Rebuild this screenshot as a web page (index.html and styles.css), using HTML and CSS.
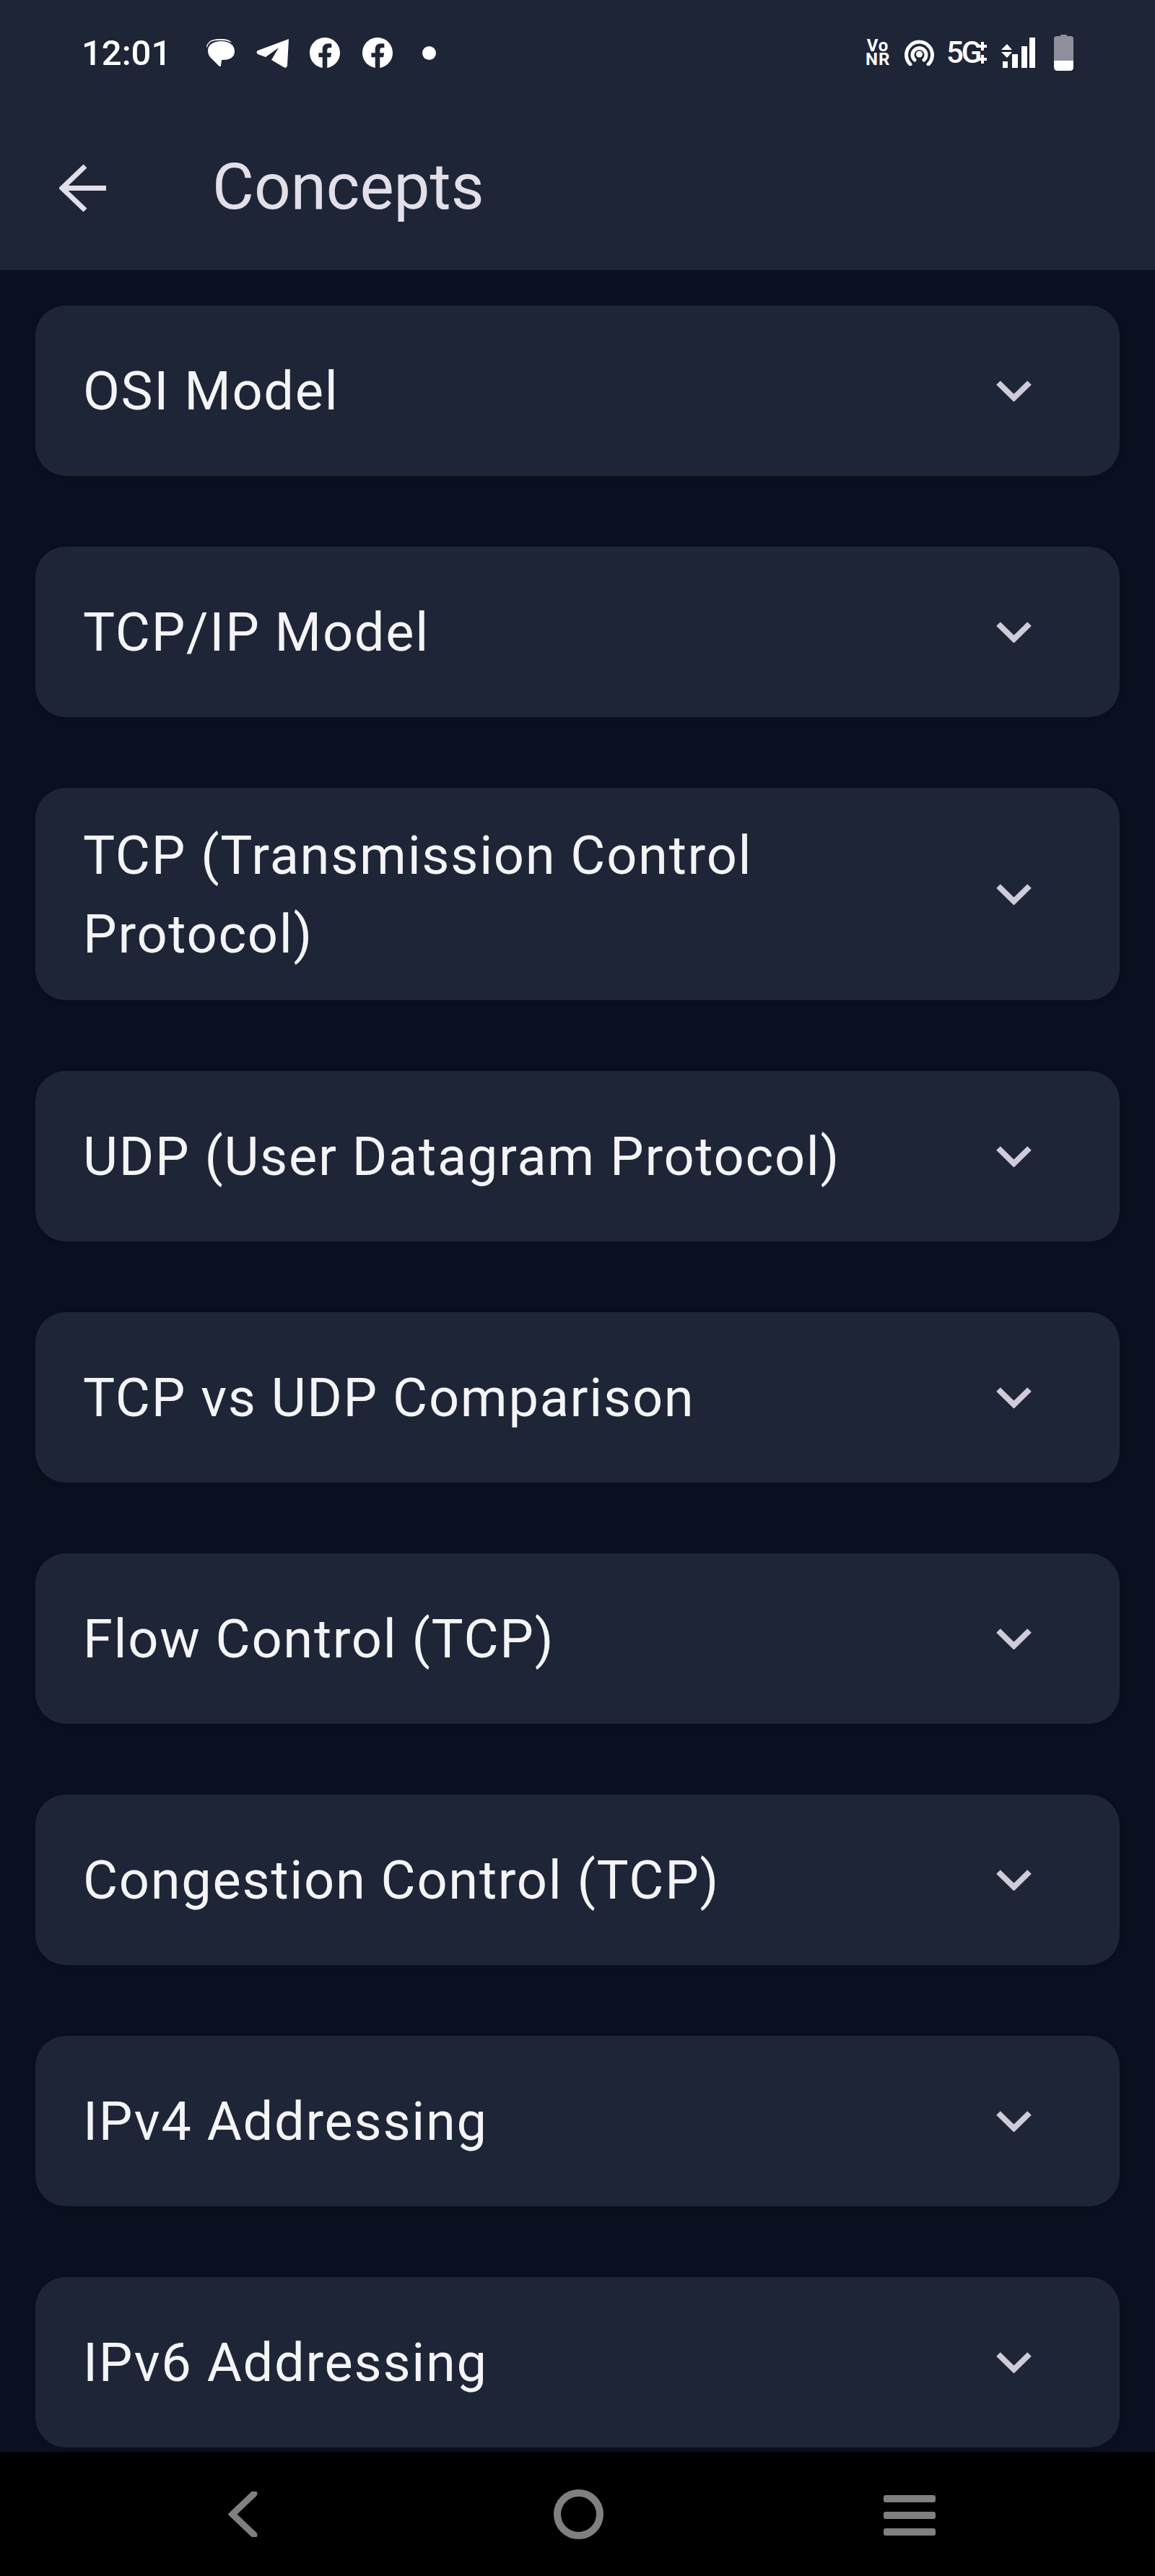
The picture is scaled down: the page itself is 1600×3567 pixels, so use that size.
FILE: index.html
```html
<!DOCTYPE html>
<html lang="en">
<head>
    <meta charset="UTF-8">
    <meta name="viewport" content="width=device-width, initial-scale=1.0">
    <title>Concepts</title>
    <link rel="stylesheet" href="styles.css">
</head>
<body>
    <div class="phone">
        <header class="top">
            <div class="status-bar">
                <span class="time">12:01</span>
                <svg class="ic-msg" viewBox="0 0 40 38"><path class="white" d="M4 5 C8 0 16 0 22 0 C28 0 33 1 36 5 L33 4 C27 1 12 1 7 4 C4 6 2 9 2 12 C0 10 2 7 4 5 Z"/><path class="white" d="M21 3 C32 3 40 8 40 17 C40 26 32 29 24 29 L22 29 L21 37 Q20 39 18 37 L9 28 C5 25 3 21 3 16 C3 8 11 3 21 3 Z"/></svg>
                <svg class="ic-tg" viewBox="0 0 45 41"><path class="white" d="M45 1 L43 38 Q42 42 38 40 L21 30 L31 13 L13 26 L2 22 Q-1 19 2 17 Z"/></svg>
                <svg class="ic-fb" viewBox="2 2 20 20"><path class="white" d="M12 2.04c-5.5 0-10 4.49-10 10.02 0 5 3.66 9.15 8.44 9.9v-7H7.9v-2.9h2.54V9.85c0-2.51 1.49-3.89 3.78-3.89 1.09 0 2.23.19 2.23.19v2.47h-1.26c-1.24 0-1.63.77-1.63 1.56v1.88h2.78l-.45 2.9h-2.33v7a10 10 0 0 0 8.44-9.9c0-5.53-4.5-10.02-10-10.02z"/></svg>
                <svg class="ic-fb ic-fb2" viewBox="2 2 20 20"><path class="white" d="M12 2.04c-5.5 0-10 4.49-10 10.02 0 5 3.66 9.15 8.44 9.9v-7H7.9v-2.9h2.54V9.85c0-2.51 1.49-3.89 3.78-3.89 1.09 0 2.23.19 2.23.19v2.47h-1.26c-1.24 0-1.63.77-1.63 1.56v1.88h2.78l-.45 2.9h-2.33v7a10 10 0 0 0 8.44-9.9c0-5.53-4.5-10.02-10-10.02z"/></svg>
                <span class="dot"></span>
                <span class="vonr">Vo<br>NR</span>
                <svg class="ic-hotspot" viewBox="0 0 41 36">
                    <circle class="white" cx="20.5" cy="20" r="4.5"/>
                    <path class="ring" d="M8 34 A18 18 0 1 1 33 34"/>
                    <path class="ring" d="M14 28 A9.5 9.5 0 1 1 27 28"/>
                </svg>
                <span class="net">5G</span>
                <svg class="ic-plus" viewBox="0 0 14 32"><path d="M7 1 V13 M1 7 H13 M7 19 V31 M1 25 H13"/></svg>
                <svg class="ic-signal" viewBox="0 0 47 42">
                    <path class="white" d="M8 9 L15 17 H0 Z M0 20 H15 L8 28 Z"/>
                    <rect class="white" x="2" y="33" width="7" height="9"/>
                    <rect class="white" x="15" y="23" width="8" height="19"/>
                    <rect class="white" x="28" y="12" width="8" height="30"/>
                    <rect class="white" x="39" y="0" width="8" height="42"/>
                </svg>
                <svg class="ic-battery" viewBox="0 0 27 50">
                    <path class="batt-empty" d="M9 0 H18 V2 H23 Q27 2 27 6 V36 H0 V6 Q0 2 4 2 H9 Z"/>
                    <path class="white" d="M0 36 H27 V45 Q27 50 22 50 H5 Q0 50 0 45 Z"/>
                </svg>
            </div>
            <div class="app-bar">
                <svg class="back-arrow" viewBox="0 0 65 65"><path d="M36 2 L4 32.5 L36 63 M4 32.5 H65"/></svg>
                <h1>Concepts</h1>
            </div>
        </header>

        <main class="list">
            <div class="card"><span>OSI Model</span><svg class="chev" viewBox="0 0 49 29"><path d="M3 3 L24.5 24 L46 3"/></svg></div>
            <div class="card"><span>TCP/IP Model</span><svg class="chev" viewBox="0 0 49 29"><path d="M3 3 L24.5 24 L46 3"/></svg></div>
            <div class="card"><span>TCP (Transmission Control Protocol)</span><svg class="chev" viewBox="0 0 49 29"><path d="M3 3 L24.5 24 L46 3"/></svg></div>
            <div class="card"><span>UDP (User Datagram Protocol)</span><svg class="chev" viewBox="0 0 49 29"><path d="M3 3 L24.5 24 L46 3"/></svg></div>
            <div class="card"><span>TCP vs UDP Comparison</span><svg class="chev" viewBox="0 0 49 29"><path d="M3 3 L24.5 24 L46 3"/></svg></div>
            <div class="card"><span>Flow Control (TCP)</span><svg class="chev" viewBox="0 0 49 29"><path d="M3 3 L24.5 24 L46 3"/></svg></div>
            <div class="card"><span>Congestion Control (TCP)</span><svg class="chev" viewBox="0 0 49 29"><path d="M3 3 L24.5 24 L46 3"/></svg></div>
            <div class="card"><span>IPv4 Addressing</span><svg class="chev" viewBox="0 0 49 29"><path d="M3 3 L24.5 24 L46 3"/></svg></div>
            <div class="card"><span>IPv6 Addressing</span><svg class="chev" viewBox="0 0 49 29"><path d="M3 3 L24.5 24 L46 3"/></svg></div>
        </main>

        <nav class="nav-bar">
            <svg class="nav-back" viewBox="0 0 41 63"><path d="M36 3 L6 31.5 L36 60"/></svg>
            <span class="nav-home"></span>
            <span class="nav-recent"><i></i><i></i><i></i></span>
        </nav>
    </div>
</body>
</html>
```

FILE: styles.css
```css
/* General Styles */
* {
    box-sizing: border-box;
}

body {
    margin: 0;
    padding: 0;
    font-family: Roboto, "Liberation Sans", sans-serif;
    background: #0a101f;
}

.phone {
    display: flex;
    flex-direction: column;
    height: 3567px;
    overflow: hidden;
}

.white {
    fill: #fff;
}

/* Header */
.top {
    flex: none;
    height: 374px;
    background-color: #1e2536;
}

.status-bar {
    display: flex;
    align-items: center;
    height: 146px;
    padding-left: 113px;
    color: #fff;
}

.time {
    width: 121px;
    font-size: 49px;
    font-weight: 500;
    line-height: 1;
}

.status-bar svg {
    flex: none;
}

.ic-msg {
    width: 40px;
    height: 38px;
    margin-left: 51px;
}

.ic-tg {
    width: 45px;
    height: 41px;
    margin-left: 30px;
}

.ic-fb {
    width: 42px;
    height: 42px;
    margin-left: 29px;
}

.ic-fb2 {
    margin-left: 31px;
}

.dot {
    width: 19px;
    height: 19px;
    margin-left: 41px;
    border-radius: 50%;
    background: #fff;
}

.vonr {
    width: 34px;
    margin-left: 595px;
    font-size: 24px;
    font-weight: 700;
    line-height: 19px;
    letter-spacing: 1px;
    text-align: center;
}

.ic-hotspot {
    width: 41px;
    height: 36px;
    margin-left: 20px;
}

.ring {
    fill: none;
    stroke: #fff;
    stroke-width: 5px;
    stroke-linecap: round;
}

.net {
    width: 42px;
    margin-left: 17px;
    font-size: 42px;
    font-weight: 500;
    line-height: 1;
    letter-spacing: -3px;
}

.ic-plus {
    width: 14px;
    height: 32px;
    margin-left: 1px;
}

.ic-plus path {
    fill: none;
    stroke: #fff;
    stroke-width: 4px;
}

.ic-signal {
    width: 47px;
    height: 42px;
    margin-left: 19px;
}

.ic-battery {
    width: 27px;
    height: 50px;
    margin-left: 26px;
}

.batt-empty {
    fill: #8f909c;
}

.app-bar {
    display: flex;
    align-items: center;
    height: 228px;
    padding-left: 82px;
}

.back-arrow {
    width: 65px;
    height: 65px;
    flex: none;
}

.back-arrow path {
    fill: none;
    stroke: #e2dfe9;
    stroke-width: 7px;
}

h1 {
    margin: 0 0 4px 147px;
    font-size: 89px;
    font-weight: 400;
    color: #e2dfe9;
}

/* Concept list */
.list {
    flex: 1;
    min-height: 0;
    overflow: hidden;
    display: flex;
    flex-direction: column;
    gap: 98px;
    padding: 49px 49px 0;
}

.card {
    flex: none;
    display: flex;
    align-items: center;
    justify-content: space-between;
    min-height: 236px;
    padding: 36.5px 122px 36.5px 66px;
    background-color: #1e2536;
    border-radius: 42px;
    box-shadow: 0 2px 6px rgba(0, 0, 0, 0.15);
    font-size: 74px;
    line-height: 109.5px;
    letter-spacing: 1.7px;
    color: #f4f4f6;
}

.card span {
    max-width: 1100px;
    padding-top: 2px;
}

.chev {
    flex: none;
    width: 49px;
    height: 29px;
}

.chev path {
    fill: none;
    stroke: #cfcbd8;
    stroke-width: 8px;
}

/* Bottom nav */
.nav-bar {
    flex: none;
    position: relative;
    height: 172px;
    background: #000;
}

.nav-back {
    position: absolute;
    left: 316px;
    top: 55px;
    width: 41px;
    height: 63px;
}

.nav-back path {
    fill: none;
    stroke: #808080;
    stroke-width: 9px;
    stroke-linecap: round;
}

.nav-home {
    position: absolute;
    left: 767px;
    top: 52px;
    width: 69px;
    height: 69px;
    border: 10px solid #808080;
    border-radius: 50%;
}

.nav-recent {
    position: absolute;
    left: 1224px;
    top: 60px;
    display: flex;
    flex-direction: column;
    gap: 13px;
    width: 72px;
}

.nav-recent i {
    display: block;
    height: 10px;
    border-radius: 3px;
    background: #808080;
}
```
